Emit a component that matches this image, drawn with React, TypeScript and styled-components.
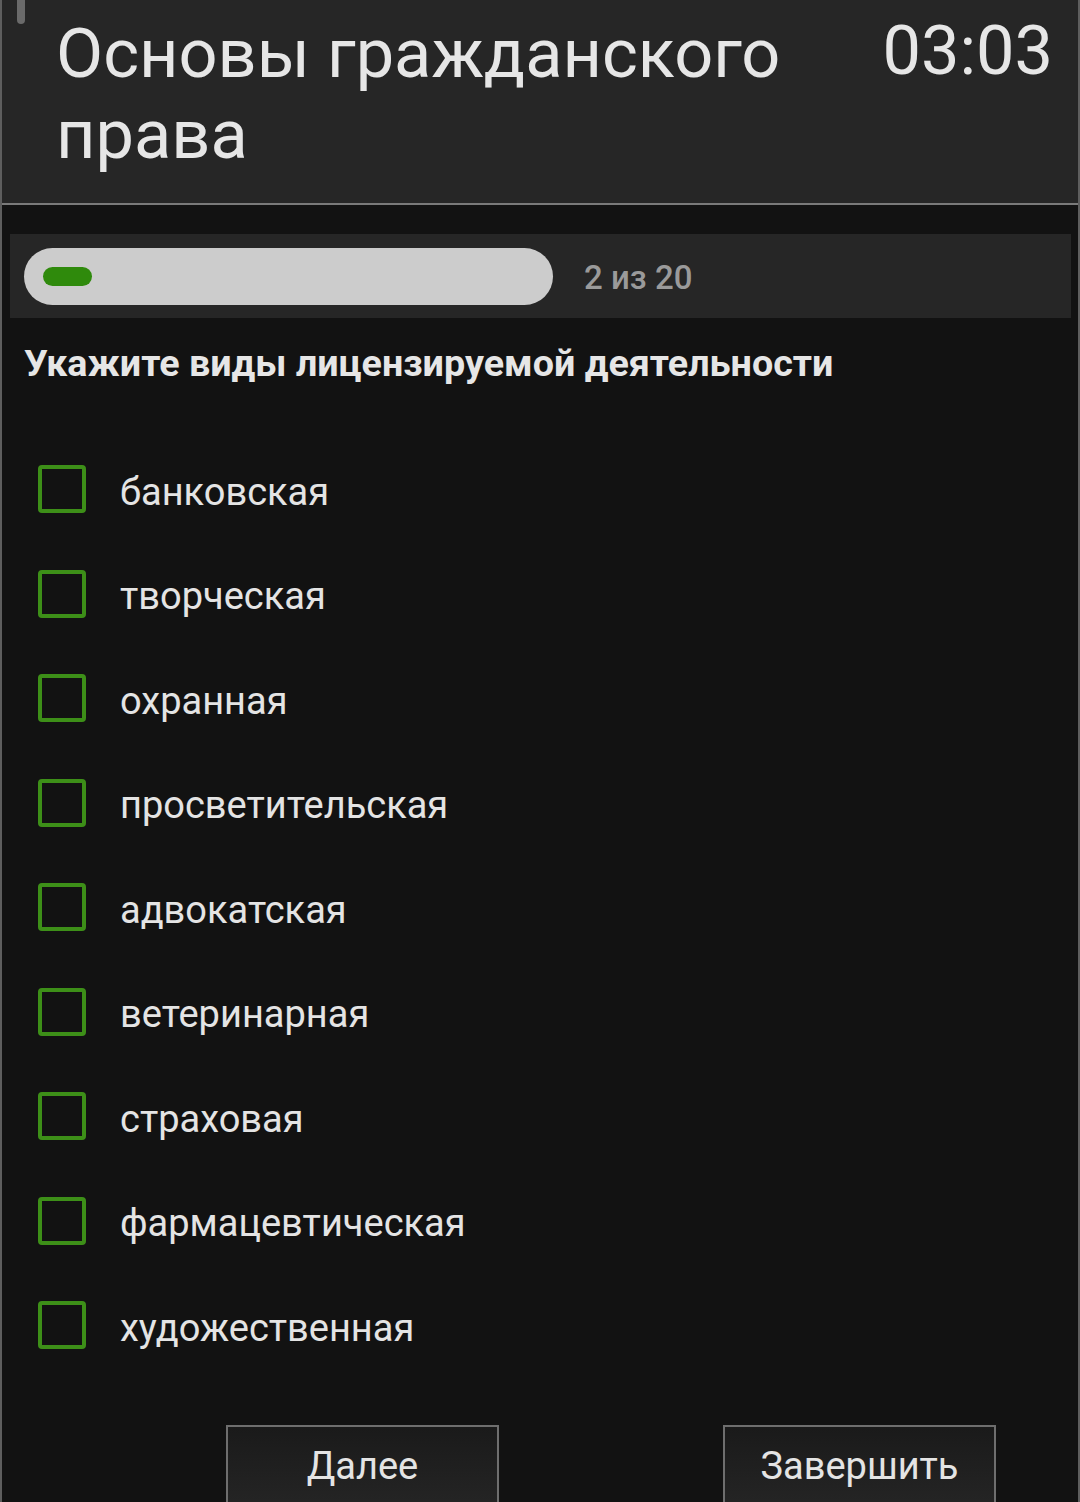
import styled, { createGlobalStyle } from "styled-components";

const GlobalStyle = createGlobalStyle`
  html, body {
    margin: 0;
    padding: 0;
    background: #121212;
  }
  body {
    font-family: Roboto, "Noto Sans", "Liberation Sans", sans-serif;
    color: #e4e4e4;
  }
  * {
    box-sizing: border-box;
  }
`;

const options = [
  "банковская",
  "творческая",
  "охранная",
  "просветительская",
  "адвокатская",
  "ветеринарная",
  "страховая",
  "фармацевтическая",
  "художественная",
];

const App: React.FC = () => {
  const current = 2;
  const total = 20;

  return (
    <>
      <GlobalStyle />
      <StyledPage>
        <StyledScrollThumb />
        <StyledHeader>
          <StyledTitle>Основы гражданского права</StyledTitle>
          <StyledTimer>03:03</StyledTimer>
        </StyledHeader>

        <StyledProgressPanel>
          <StyledProgressTrack>
            <StyledProgressFill />
          </StyledProgressTrack>
          <StyledProgressText>{current} из {total}</StyledProgressText>
        </StyledProgressPanel>

        <StyledQuestion>Укажите виды лицензируемой деятельности</StyledQuestion>

        <StyledOptions>
          {options.map((option) => (
            <StyledOption key={option}>
              <StyledCheckbox type="checkbox" />
              <StyledLabel>{option}</StyledLabel>
            </StyledOption>
          ))}
        </StyledOptions>

        <StyledButtons>
          <StyledButton>Далее</StyledButton>
          <StyledButton>Завершить</StyledButton>
        </StyledButtons>
      </StyledPage>
    </>
  );
};

export default App;

const StyledPage = styled.div`
  position: relative;
  min-height: 1502px;
  background: #121212;
  border-left: 2px solid #5e5e5e;
  border-right: 2px solid #5e5e5e;
`;

const StyledScrollThumb = styled.div`
  position: absolute;
  top: 0;
  left: 15px;
  width: 8px;
  height: 24px;
  border-radius: 0 0 4px 4px;
  background: #6a6a6a;
`;

const StyledHeader = styled.header`
  display: flex;
  align-items: flex-start;
  justify-content: space-between;
  padding: 13px 25px 28px 54px;
  background: #262626;
  border-bottom: 2px solid #7a7a7a;
`;

const StyledTitle = styled.h1`
  flex: 1;
  margin: 0;
  max-width: 760px;
  font-size: 68.5px;
  font-weight: 400;
  line-height: 81px;
  color: #e6e6e6;
`;

const StyledTimer = styled.div`
  flex: none;
  margin-top: -3px;
  font-size: 68.5px;
  line-height: 81px;
  color: #e6e6e6;
`;

const StyledProgressPanel = styled.div`
  display: flex;
  align-items: center;
  gap: 31px;
  height: 84px;
  margin: 29px 7px 0 8px;
  padding: 0 14px;
  background: #262626;
`;

const StyledProgressTrack = styled.div`
  display: flex;
  align-items: center;
  width: 529px;
  height: 57px;
  padding-left: 19px;
  border-radius: 29px;
  background: #cccccc;
`;

const StyledProgressFill = styled.div`
  width: 49px;
  height: 19px;
  border-radius: 10px;
  background: #2f8a0c;
`;

const StyledProgressText = styled.span`
  margin-top: 2px;
  font-size: 33px;
  font-weight: 500;
  color: #9a9a9a;
`;

const StyledQuestion = styled.h2`
  margin: 24px 0 0;
  padding-left: 22px;
  font-size: 37.7px;
  font-weight: 700;
  line-height: 42px;
  color: #e6e6e6;
`;

const StyledOptions = styled.ul`
  list-style: none;
  margin: 53px 0 0;
  padding: 0;
`;

const StyledOption = styled.li`
  display: flex;
  align-items: center;
  gap: 34px;
  height: 104.5px;
  padding-left: 36px;
`;

const StyledLabel = styled.span`
  margin-top: 5px;
  font-size: 38px;
  color: #e4e4e4;
`;

const StyledCheckbox = styled.input`
  appearance: none;
  flex: none;
  width: 48px;
  height: 48px;
  margin: 0;
  border: 4px solid #3d8f18;
  border-radius: 4px;
  background: transparent;
`;

const StyledButtons = styled.div`
  display: flex;
  gap: 224px;
  margin-top: 47px;
  padding-left: 224px;
`;

const StyledButton = styled.button`
  width: 273px;
  height: 90px;
  padding: 0 0 10px;
  border: 2px solid #6e6e6e;
  border-bottom: none;
  background: linear-gradient(#1a1a1a, #262626);
  font-family: Roboto, "Noto Sans", sans-serif;
  font-size: 38px;
  color: #e4e4e4;
`;
